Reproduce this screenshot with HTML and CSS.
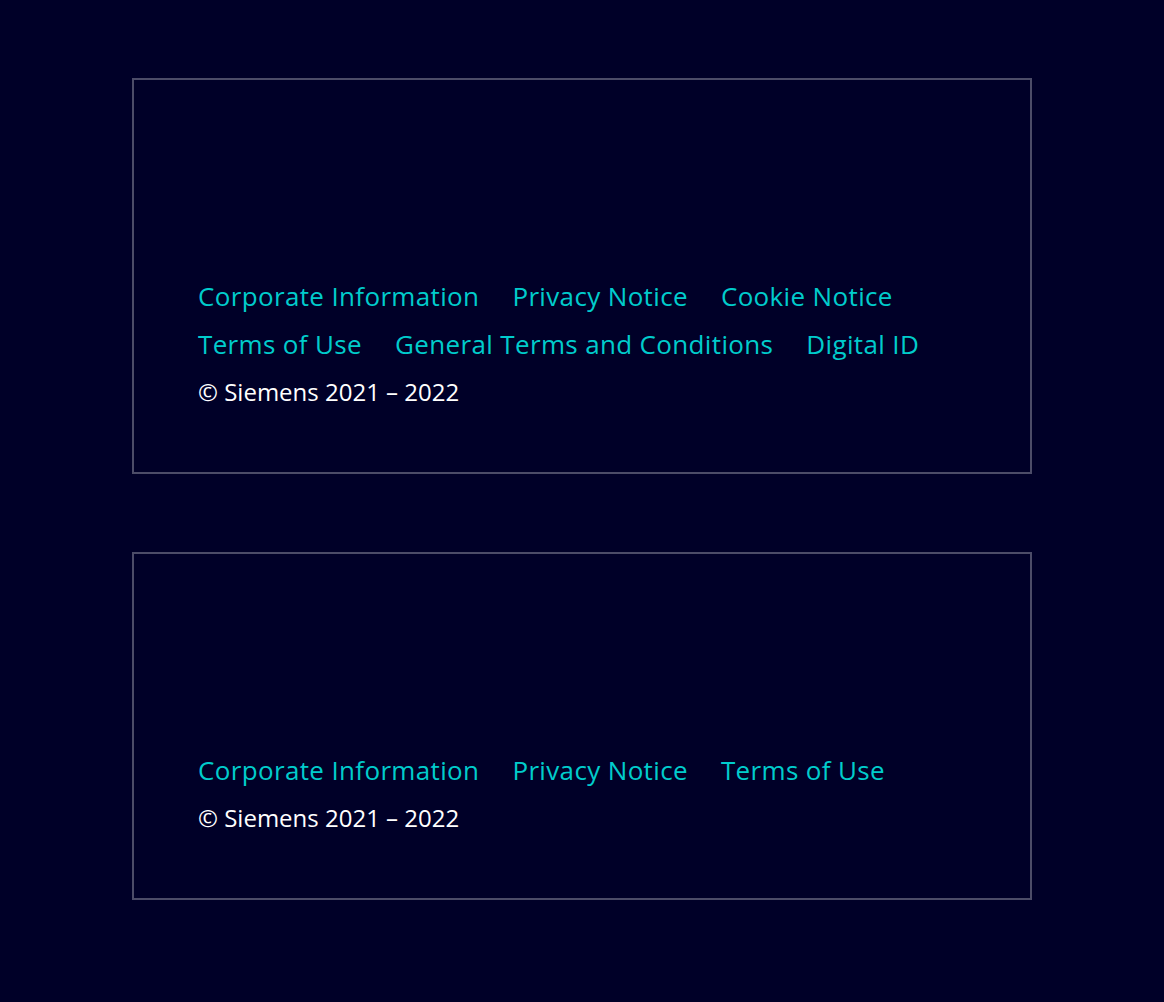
FILE: index.html
```html
<!DOCTYPE html>
<html lang="en">
<head>
<meta charset="utf-8">
<title>Footer</title>
<link rel="stylesheet" href="styles.css">
</head>
<body>
<main class="page">
  <footer class="footer">
    <nav class="links">
      <a class="link" href="#">Corporate Information</a>
      <a class="link" href="#">Privacy Notice</a>
      <a class="link" href="#">Cookie Notice</a>
      <a class="link" href="#">Terms of Use</a>
      <a class="link" href="#">General Terms and Conditions</a>
      <a class="link" href="#">Digital ID</a>
    </nav>
    <p class="copy">© Siemens 2021 – 2022</p>
  </footer>
  <footer class="footer">
    <nav class="links">
      <a class="link" href="#">Corporate Information</a>
      <a class="link" href="#">Privacy Notice</a>
      <a class="link" href="#">Terms of Use</a>
    </nav>
    <p class="copy">© Siemens 2021 – 2022</p>
  </footer>
</main>
</body>
</html>
```
FILE: styles.css
```css
html, body {
  margin: 0;
  padding: 0;
  background: #000028;
}
body {
  font-family: "Open Sans", "Noto Sans", sans-serif;
}
.page {
  padding: 78px 132px;
  display: flex;
  flex-direction: column;
  gap: 78px;
}
.footer {
  border: 2px solid #4c4c68;
  padding: 192px 64px 56px;
}
.links {
  display: flex;
  flex-wrap: wrap;
  column-gap: 33px;
  max-width: 740px;
}
.link {
  color: #00cccc;
  text-decoration: none;
  font-size: 26px;
  letter-spacing: 0.35px;
  line-height: 48px;
}
.copy {
  margin: 0;
  color: #ffffff;
  font-size: 24px;
  line-height: 48px;
}
```
